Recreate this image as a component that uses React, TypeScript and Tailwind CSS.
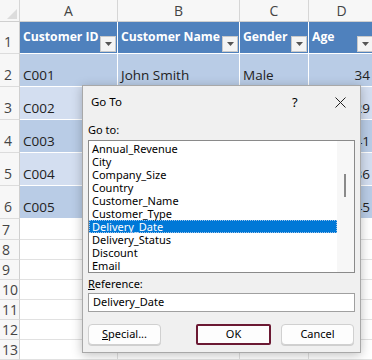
import { useState } from 'react';

const sheetFont = { fontFamily: '"Open Sans", "Liberation Sans", sans-serif' };
const uiFont = { fontFamily: '"Noto Sans", "Open Sans", sans-serif' };

const cols = 'grid grid-cols-[20px_98px_122px_69px_66px]';

const rows = [
  { id: 'C001', name: 'John Smith', gender: 'Male', age: '34', band: 'bg-[#b9cce6]' },
  { id: 'C002', name: '', gender: '', age: '29', band: 'bg-[#d3def0]' },
  { id: 'C003', name: '', gender: '', age: '41', band: 'bg-[#b9cce6]' },
  { id: 'C004', name: '', gender: '', age: '36', band: 'bg-[#d3def0]' },
  { id: 'C005', name: '', gender: '', age: '45', band: 'bg-[#b9cce6]' },
];

const names = [
  'Annual_Revenue',
  'City',
  'Company_Size',
  'Country',
  'Customer_Name',
  'Customer_Type',
  'Delivery_Date',
  'Delivery_Status',
  'Discount',
  'Email',
];

const FilterButton = () => (
  <div className="absolute right-[1px] bottom-[1px] w-[16px] h-[16px] bg-[#f4f4f4] border border-[#c9c9c9] flex items-center justify-center">
    <svg width="7" height="4" viewBox="0 0 7 4">
      <path d="M0 0 L7 0 L3.5 4 Z" fill="#555" />
    </svg>
  </div>
);

const Sheet = () => (
  <div className="w-[372px] h-[360px] bg-white overflow-hidden text-[#222]" style={sheetFont}>
    {/* column letters */}
    <div className={`${cols} h-[22px] bg-[#f7f7f7] border-b border-[#cfcfcf] text-[14px] text-[#444]`}>
      <div className="relative border-r border-[#d6d6d6]">
        <svg className="absolute right-[2px] bottom-[2px]" width="10" height="10" viewBox="0 0 10 10">
          <path d="M10 0 L10 10 L0 10 Z" fill="#dcdcdc" />
        </svg>
      </div>
      {['A', 'B', 'C', 'D'].map((c) => (
        <div key={c} className="flex items-center justify-center border-r border-[#d6d6d6]">{c}</div>
      ))}
    </div>

    {/* header row */}
    <div className={`${cols} h-[32px]`}>
      <div className="flex items-end pl-[4px] pb-[1px] text-[14px] text-[#444] bg-[#f7f7f7] border-r border-[#cfcfcf] border-b border-b-[#dcdcdc]">1</div>
      {['Customer ID', 'Customer Name', 'Gender', 'Age'].map((h) => (
        <div key={h} className="relative bg-[#4f81bd] border-r border-b border-white text-white font-bold text-[12.2px] flex items-center pl-[3px] pb-[1px] whitespace-nowrap">
          {h}
          <FilterButton />
        </div>
      ))}
    </div>

    {/* data rows */}
    {rows.map((r, i) => (
      <div key={r.id} className={`${cols} h-[33px] text-[13.5px]`}>
        <div className="flex items-end pl-[4px] pb-[1px] text-[14px] text-[#444] bg-[#f7f7f7] border-r border-[#cfcfcf] border-b border-b-[#dcdcdc]">{i + 2}</div>
        <div className={`${r.band} border-r border-b border-white flex items-end pl-[3px] pb-[1px]`}>{r.id}</div>
        <div className={`${r.band} border-r border-b border-white flex items-end pl-[3px] pb-[1px]`}>{r.name}</div>
        <div className={`${r.band} border-r border-b border-white flex items-end pl-[3px] pb-[1px]`}>{r.gender}</div>
        <div className={`${r.band} border-b border-white flex items-end justify-end pr-[5px] pb-[1px]`}>{r.age}</div>
      </div>
    ))}

    {/* empty rows */}
    {[7, 8, 9, 10, 11, 12, 13].map((n) => (
      <div key={n} className={`${cols} ${n === 7 ? 'h-[21px]' : 'h-[20px]'}`}>
        <div className="flex items-end pl-[2px] text-[14px] leading-[19px] text-[#444] bg-[#f7f7f7] border-r border-[#cfcfcf] border-b border-b-[#dcdcdc]">{n}</div>
        <div className="border-r border-b border-[#e1e1e1]" />
        <div className="border-r border-b border-[#e1e1e1]" />
        <div className="border-r border-b border-[#e1e1e1]" />
        <div className="border-b border-[#e1e1e1]" />
      </div>
    ))}
  </div>
);

const GoToDialog = () => {
  const [selected, setSelected] = useState('Delivery_Date');

  return (
    <div
      className="absolute left-[82px] top-[85px] w-[279px] h-[268px] bg-[#f0f0f0] border border-[#a8a8a8] shadow-[0_2px_10px_rgba(0,0,0,0.25)] flex flex-col text-[11px] text-black"
      style={uiFont}
    >
      <div className="h-[31px] flex items-center pl-[8px] text-[11.5px] relative">
        Go To
        <span className="absolute left-[209px] top-[7px] text-[13px]">?</span>
        <svg className="absolute left-[252px] top-[11px]" width="11" height="11" viewBox="0 0 11 11">
          <path d="M0.5 0.5 L10.5 10.5 M10.5 0.5 L0.5 10.5" stroke="#222" strokeWidth="1" />
        </svg>
      </div>

      <div className="px-[5px] flex flex-col">
        <div className="mt-[5px] leading-[16px]">Go to:</div>
        <div className="mt-[2px] h-[133px] bg-white border border-[#8a8a8a] flex">
          <div className="flex-1 pt-[1px]">
            {names.map((n) => (
              <div
                key={n}
                onClick={() => setSelected(n)}
                className={`h-[13px] leading-[13px] pl-[3px] whitespace-nowrap ${
                  n === selected ? 'bg-[#0078d7] text-white outline outline-1 outline-dotted outline-[#9ec3ea] -outline-offset-1' : ''
                }`}
              >
                {n}
              </div>
            ))}
          </div>
          <div className="w-[17px] bg-[#f7f7f7] relative">
            <div className="absolute left-[7px] top-[33px] w-[2px] h-[23px] bg-[#8a8a8a]" />
          </div>
        </div>

        <div className="mt-[3px] leading-[16px]">
          <span className="underline">R</span>eference:
        </div>
        <div className="mt-[1px] h-[19px] bg-white border border-[#a0a0a0] flex items-center pl-[4px]">
          {selected}
        </div>

        <div className="mt-[12px] flex h-[21px]">
          <button className="w-[73px] h-[21px] bg-[#fdfdfd] border border-[#d0d0d0] rounded-[4px] shadow-[0_1px_0_#cfcfcf]">
            <span className="underline">S</span>pecial...
          </button>
          <button className="ml-auto w-[75px] h-[21px] bg-[#fdfdfd] border-2 border-[#6b1933] rounded-[2px]">OK</button>
          <button className="ml-[10px] mr-[1px] w-[73px] h-[21px] bg-[#fdfdfd] border border-[#d0d0d0] rounded-[4px] shadow-[0_1px_0_#cfcfcf]">
            Cancel
          </button>
        </div>
      </div>
    </div>
  );
};

export default function App() {
  return (
    <div className="relative w-[372px] h-[360px] overflow-hidden">
      <Sheet />
      <GoToDialog />
    </div>
  );
}
